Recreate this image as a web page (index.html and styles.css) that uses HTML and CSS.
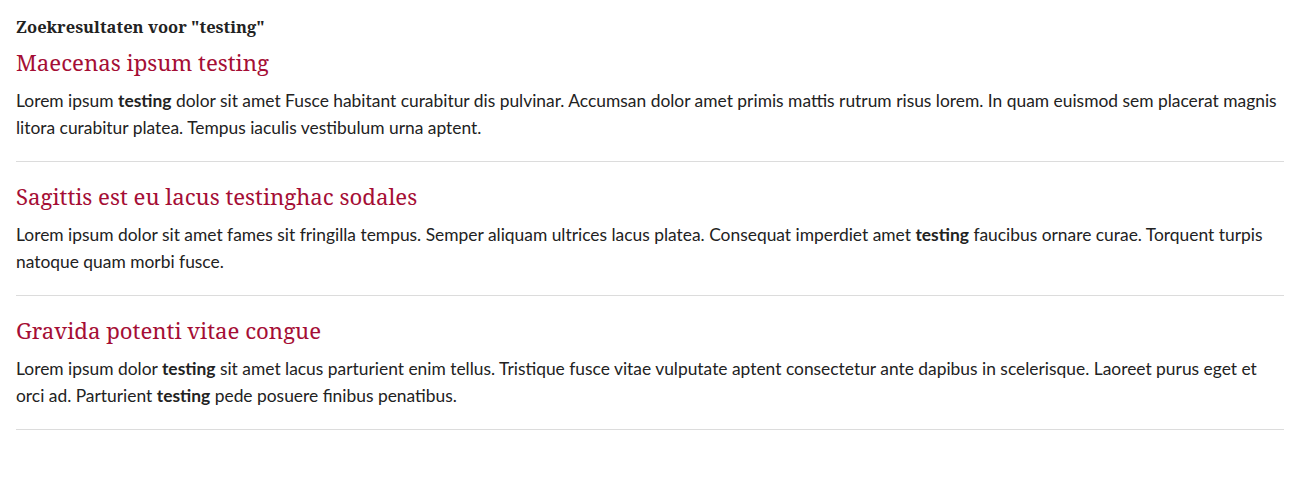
FILE: index.html
```html
<!DOCTYPE html>
<html lang="nl">
<head>
  <meta charset="UTF-8">
  <meta name="viewport" content="width=device-width, initial-scale=1.0">
  <title>Zoekresultaten</title>
  <link rel="stylesheet" href="styles.css">
</head>
<body>
  <main class="search-page">
    <h1 class="search-title">Zoekresultaten voor "testing"</h1>

    <div class="result">
      <h2 class="result-title"><a href="#">Maecenas ipsum testing</a></h2>
      <p class="result-text">Lorem ipsum <strong>testing</strong> dolor sit amet Fusce habitant curabitur dis pulvinar. Accumsan dolor amet primis mattis rutrum risus lorem. In quam euismod sem placerat magnis litora curabitur platea. Tempus iaculis vestibulum urna aptent.</p>
    </div>

    <div class="result">
      <h2 class="result-title"><a href="#">Sagittis est eu lacus testinghac sodales</a></h2>
      <p class="result-text">Lorem ipsum dolor sit amet fames sit fringilla tempus. Semper aliquam ultrices lacus platea. Consequat imperdiet amet <strong>testing</strong> faucibus ornare curae. Torquent turpis natoque quam morbi fusce.</p>
    </div>

    <div class="result">
      <h2 class="result-title"><a href="#">Gravida potenti vitae congue</a></h2>
      <p class="result-text">Lorem ipsum dolor <strong>testing</strong> sit amet lacus parturient enim tellus. Tristique fusce vitae vulputate aptent consectetur ante dapibus in scelerisque. Laoreet purus eget et orci ad. Parturient <strong>testing</strong> pede posuere finibus penatibus.</p>
    </div>
  </main>
</body>
</html>
```
FILE: styles.css
```css
* {
  box-sizing: border-box;
}

body {
  margin: 0;
  background: #fff;
  color: #222;
  font-family: Lato, "Liberation Sans", sans-serif;
}

.search-page {
  padding: 15px 16px 0;
}

.search-title {
  margin: 0 0 9px;
  font-family: "Noto Serif", "DejaVu Serif", serif;
  font-size: 16.5px;
  font-weight: bold;
  line-height: 24px;
  color: #222;
}

/* Result items */
.result {
  padding: 20px 0;
  border-bottom: 1px solid #dcdcdc;
}

.result:first-of-type {
  padding-top: 0;
}

.result-title {
  margin: 0 0 9px;
  font-family: "Noto Serif", "DejaVu Serif", serif;
  font-size: 22.2px;
  font-weight: normal;
  line-height: 30px;
}

.result-title a {
  color: #a50e35;
  text-decoration: none;
}

.result-text {
  margin: 0;
  font-size: 17.4px;
  line-height: 27px;
}

.result-text strong {
  font-weight: bold;
}
```
